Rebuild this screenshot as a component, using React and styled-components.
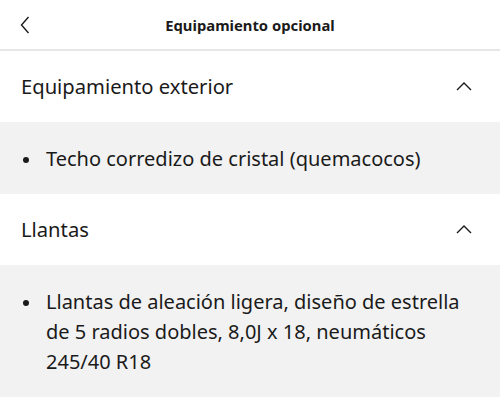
import React from 'react'
import styled, { createGlobalStyle } from 'styled-components'

const sections = [
  {
    title: 'Equipamiento exterior',
    items: ['Techo corredizo de cristal (quemacocos)'],
  },
  {
    title: 'Llantas',
    items: [
      'Llantas de aleación ligera, diseño de estrella de 5 radios dobles, 8,0J x 18, neumáticos 245/40 R18',
    ],
  },
]

function App() {
  return (
    <>
      <Global />
      <Page>
        <Header>
          <Back aria-label="Volver">
            <svg width="10" height="18" viewBox="0 0 10 18">
              <path d="M8.5 1 L1.5 9 L8.5 17" fill="none" stroke="#1a1a1a" strokeWidth="1.4" />
            </svg>
          </Back>
          <Title>Equipamiento opcional</Title>
        </Header>
        {sections.map((s) => (
          <Section key={s.title}>
            <SectionHead>
              <SectionTitle>{s.title}</SectionTitle>
              <svg width="16" height="9" viewBox="0 0 16 9">
                <path d="M1 8 L8 1 L15 8" fill="none" stroke="#1a1a1a" strokeWidth="1.4" />
              </svg>
            </SectionHead>
            <Panel>
              <List>
                {s.items.map((it) => (
                  <Item key={it}>{it}</Item>
                ))}
              </List>
            </Panel>
          </Section>
        ))}
      </Page>
    </>
  )
}

export default App

const Global = createGlobalStyle`
  body {
    margin: 0;
    background: #fff;
    font-family: "Noto Sans", "Open Sans", sans-serif;
    color: #1a1a1a;
  }
`
const Page = styled.div`
  width: 500px;
  display: flex;
  flex-direction: column;
`
const Header = styled.div`
  height: 49px;
  border-bottom: 2px solid #e6e6e6;
  display: flex;
  align-items: center;
  justify-content: center;
  position: relative;
`
const Back = styled.div`
  position: absolute;
  left: 20px;
  top: 16px;
  display: flex;
`
const Title = styled.div`
  font-size: 14.8px;
  font-weight: 700;
`
const Section = styled.div`
  display: flex;
  flex-direction: column;
`
const SectionHead = styled.div`
  height: 71px;
  padding: 0 28px 0 21px;
  display: flex;
  align-items: center;
  justify-content: space-between;
`
const SectionTitle = styled.div`
  font-size: 20.2px;
  padding-bottom: 2px;
`
const Panel = styled.div`
  background: #f2f2f2;
  padding: 22px 30px 20px 21px;
`
const List = styled.ul`
  margin: 0;
  padding: 0;
  list-style: none;
`
const Item = styled.li`
  position: relative;
  padding-left: 25px;
  font-size: 20px;
  line-height: 30px;
  &:before {
    content: '';
    position: absolute;
    left: 2px;
    top: 12.5px;
    width: 6px;
    height: 6px;
    border-radius: 50%;
    background: #1a1a1a;
  }
`
